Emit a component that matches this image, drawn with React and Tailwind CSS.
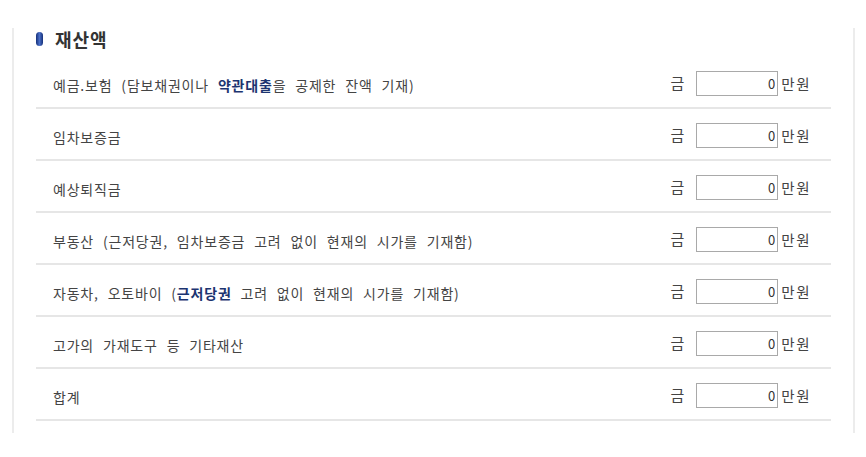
const font = { fontFamily: '"Noto Sans CJK KR", "Noto Sans", sans-serif' };

const rows = [
  {
    label: (
      <>
        예금.보험 (담보채권이나{" "}
        <b className="font-bold text-[#1c3470]">약관대출</b>을 공제한 잔액 기재)
      </>
    ),
  },
  { label: "임차보증금" },
  { label: "예상퇴직금" },
  { label: "부동산 (근저당권, 임차보증금 고려 없이 현재의 시가를 기재함)" },
  {
    label: (
      <>
        자동차, 오토바이 (<b className="font-bold text-[#1c3470]">근저당권</b>{" "}
        고려 없이 현재의 시가를 기재함)
      </>
    ),
  },
  { label: "고가의 가재도구 등 기타재산" },
  { label: "합계" },
];

const AssetRow = ({ label }) => {
  return (
    <div className="flex items-center pt-[14px] pb-[11px] border-b-2 border-[#e6e6e6]">
      <div className="flex-1 pl-[17px] pt-[3px] text-[14px] tracking-[0.8px] [word-spacing:5px] text-[#444]">
        {label}
      </div>
      <div className="flex items-center pr-[20px] text-[14px] text-[#444]">
        <span className="mr-[12px] text-[15px]">금</span>
        <input
          readOnly
          value="0"
          className="w-[82px] h-[25px] border border-[#a9a9a9] text-right pr-[2px] text-[13px] text-[#333] outline-none"
          style={font}
        />
        <span className="ml-[3px] text-[14.5px] tracking-[1.5px]">만원</span>
      </div>
    </div>
  );
};

const App = () => {
  return (
    <div className="w-[866px] h-[457px] bg-white pt-[20px]" style={font}>
      <div className="ml-[12px] w-[843px] border-x-2 border-[#ececec] px-[22px] pb-[12px]">
        <div className="flex items-center h-[22px] mt-[8px] mb-[7px]">
          <span className="w-[7px] h-[14px] rounded-full bg-gradient-to-r from-[#16307a] via-[#4a6fc7] to-[#16307a]" />
          <h2 className="ml-[12px] text-[18px] tracking-[1px] font-bold text-[#333] leading-none">
            재산액
          </h2>
        </div>
        {rows.map((row, i) => (
          <AssetRow key={i} label={row.label} />
        ))}
      </div>
    </div>
  );
};

export default App;
